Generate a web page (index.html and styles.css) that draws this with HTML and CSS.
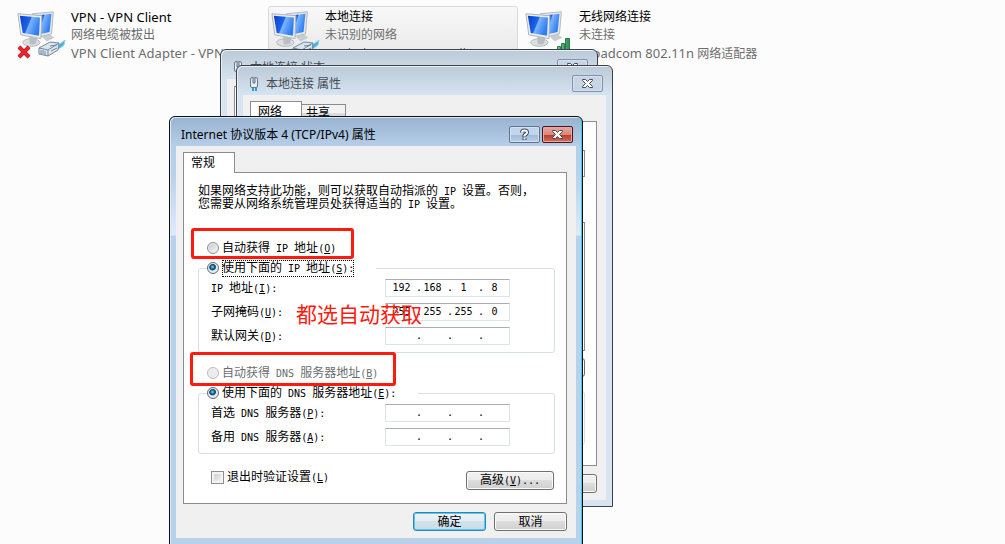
FILE: index.html
```html
<!DOCTYPE html>
<html lang="zh-CN">
<head>
<meta charset="utf-8">
<title>Internet 协议版本 4 (TCP/IPv4) 属性</title>
<link rel="stylesheet" href="styles.css">
</head>
<body>
<svg class="defs" aria-hidden="true">
  <defs>
    <linearGradient id="screen" x1="0" y1="0" x2="1" y2="0.4">
      <stop offset="0" stop-color="#0d3fc4"/><stop offset="0.5" stop-color="#1a63ee"/><stop offset="0.56" stop-color="#7cb5fb"/><stop offset="1" stop-color="#2f7df2"/>
    </linearGradient>
    <linearGradient id="bars" x1="0" y1="0" x2="1" y2="0">
      <stop offset="0" stop-color="#8fd0a4"/><stop offset="1" stop-color="#2f8f55"/>
    </linearGradient>
    <symbol id="monitors" viewBox="0 0 48 48">
      <path d="M27 30l8-3 5 4-8 4z" fill="#c9cdd0"/>
      <path d="M17 6l22-2-2 23-16 4z" fill="#e4e7e8" stroke="#b3b8bc"/>
      <path d="M19 8l18-2-2 19-13 3z" fill="url(#screen)"/>
      <ellipse cx="16" cy="36" rx="9" ry="4" fill="#dcdfe1" stroke="#b3b8bc"/>
      <path d="M14 30l8 1-1 6q-4 2-7 0z" fill="#b9bec2"/>
      <path d="M2 6l25 2-1 24-21-4z" fill="#eceeef" stroke="#aeb3b8"/>
      <path d="M4 8l21 2-1 19-17-3z" fill="url(#screen)"/>
    </symbol>
    <symbol id="plug" viewBox="0 0 28 18">
      <path d="M16 7q6-1 11-6l-1 5q-4 4-9 5z" fill="#43b2dc" stroke="#8fd0e6"/>
      <path d="M1 9l11-6 9 1-1 7-10 6-9-2z" fill="#dce6ef" stroke="#72889d"/>
      <path d="M1 9l9 2 11-7M10 11v6M3 11v4M5 11v4M7 12v4M12 7l7-1M13 12l6-3" fill="none" stroke="#72889d"/>
    </symbol>
    <symbol id="jack" viewBox="0 0 10 16">
      <path d="M4 11v4M7 11v4" stroke="#2ba0d8" stroke-width="2"/>
      <rect x="1.500" y="1.500" width="7" height="10" rx="1.500" fill="#e4edf4" stroke="#66798c"/>
      <path d="M4 1v6h2V1" fill="#b5c4d2" stroke="#66798c"/>
    </symbol>
    <symbol id="cross" viewBox="0 0 13 11">
      <path d="M1.500 1.500h3l2 2 2-2h3v1l-3 3 3 3v1h-3l-2-2-2 2h-3v-1l3-3-3-3z" fill="#fff" stroke="#444a5c"/>
    </symbol>
    <symbol id="question" viewBox="0 0 11 13">
      <path d="M3 4.500Q3 2.500 5.500 2.500T8 4.500Q8 5.500 6.500 6.500T5.500 9M5.500 10v2" fill="none" stroke="#3f4a63" stroke-width="4"/>
      <path d="M3 4.500Q3 2.500 5.500 2.500T8 4.500Q8 5.500 6.500 6.500T5.500 8.500M5.500 10v1.500" fill="none" stroke="#fff" stroke-width="2"/>
    </symbol>
  </defs>
</svg>

<main class="desktop">
  <ul class="connections">
    <li class="connection">
      <span class="connection-icon">
        <svg class="monitors"><use href="#monitors"/></svg>
        <svg class="plug"><use href="#plug"/></svg>
        <svg class="unplugged" viewBox="0 0 14 14"><path d="M2 2l10 10M12 2L2 12" stroke="#a01318" stroke-width="4"/><path d="M2 2l10 10M12 2L2 12" stroke="#e8262c" stroke-width="3"/></svg>
      </span>
      <span class="connection-text"><b class="latin">VPN - VPN Client</b><span>网络电缆被拔出</span><span class="latin">VPN Client Adapter - VPN</span></span>
    </li>
    <li class="connection selected">
      <span class="connection-icon">
        <svg class="monitors"><use href="#monitors"/></svg>
        <svg class="plug"><use href="#plug"/></svg>
      </span>
      <span class="connection-text"><b>本地连接</b><span>未识别的网络</span><span class="latin">Realtek PCIe GBE Family C...</span></span>
    </li>
    <li class="connection">
      <span class="connection-icon">
        <svg class="monitors"><use href="#monitors"/></svg>
        <svg class="signal" viewBox="0 0 20 18"><path d="M1.500 13.500h3v4h-3zM5.500 10.500h3v7h-3zM9.500 7.500h3v10h-3zM13.500 2.500h4v15h-4z" fill="url(#bars)" stroke="#2d7d4b"/></svg>
      </span>
      <span class="connection-text"><b>无线网络连接</b><span>未连接</span><span><span class="latin">Broadcom 802.11n</span> 网络适配器</span></span>
    </li>
  </ul>

  <section class="window inactive status-window">
    <header class="titlebar">
      <svg class="jack"><use href="#jack"/></svg>
      <h2>本地连接 状态</h2>
      <button class="caption" aria-label="关闭"><svg class="cross"><use href="#cross"/></svg></button>
    </header>
    <div class="client"><div class="panel"></div></div>
  </section>

  <section class="window inactive props-window">
    <header class="titlebar">
      <svg class="jack"><use href="#jack"/></svg>
      <h2>本地连接 属性</h2>
      <button class="caption" aria-label="关闭"><svg class="cross"><use href="#cross"/></svg></button>
    </header>
    <div class="client">
      <div class="tabs"><button class="tab current">网络</button><button class="tab">共享</button></div>
      <div class="panel">
        <div class="adapter-box"></div>
        <div class="items-box"></div>
        <button class="push item-action" aria-label="属性"></button>
        <div class="about-box"></div>
      </div>
      <div class="actions"><button class="push" aria-label="取消"></button></div>
    </div>
  </section>

  <section class="window ip-window">
    <header class="titlebar">
      <h1>Internet 协议版本 4 (TCP/IPv4) 属性</h1>
      <button class="caption" aria-label="帮助"><svg class="question"><use href="#question"/></svg></button>
      <button class="caption close" aria-label="关闭"><svg class="cross"><use href="#cross"/></svg></button>
    </header>
    <div class="client">
      <div class="tabs"><button class="tab current">常规</button></div>
      <form class="panel">
        <p class="intro">如果网络支持此功能，则可以获取自动指派的<i> IP </i>设置。否则，<br>您需要从网络系统管理员处获得适当的<i> IP </i>设置。</p>

        <label class="choice auto-ip"><input type="radio" name="ip"><span>自动获得<i> IP </i>地址<i>(<u>O</u>)</i></span></label>
        <fieldset class="group">
          <legend><label class="choice"><input type="radio" name="ip" checked><span class="focused">使用下面的<i> IP </i>地址<i>(<u>S</u>):</i></span></label></legend>
          <div class="row">
            <label for="ip1"><i>IP </i>地址<i>(<u>I</u>):</i></label>
            <div class="address"><input id="ip1" value="192"><i>.</i><input aria-label="IP 2" value="168"><i>.</i><input aria-label="IP 3" value="1"><i>.</i><input aria-label="IP 4" value="8"></div>
          </div>
          <div class="row">
            <label for="mask1">子网掩码<i>(<u>U</u>):</i></label>
            <div class="address"><input id="mask1" value="255"><i>.</i><input aria-label="掩码 2" value="255"><i>.</i><input aria-label="掩码 3" value="255"><i>.</i><input aria-label="掩码 4" value="0"></div>
          </div>
          <div class="row">
            <label for="gate1">默认网关<i>(<u>D</u>):</i></label>
            <div class="address"><input id="gate1"><i>.</i><input aria-label="网关 2"><i>.</i><input aria-label="网关 3"><i>.</i><input aria-label="网关 4"></div>
          </div>
        </fieldset>

        <label class="choice auto-dns"><input type="radio" name="dns" disabled><span>自动获得<i> DNS </i>服务器地址<i>(<u>B</u>)</i></span></label>
        <fieldset class="group">
          <legend><label class="choice"><input type="radio" name="dns" checked><span>使用下面的<i> DNS </i>服务器地址<i>(<u>E</u>):</i></span></label></legend>
          <div class="row">
            <label for="dns1">首选<i> DNS </i>服务器<i>(<u>P</u>):</i></label>
            <div class="address"><input id="dns1"><i>.</i><input aria-label="首选 2"><i>.</i><input aria-label="首选 3"><i>.</i><input aria-label="首选 4"></div>
          </div>
          <div class="row">
            <label for="alt1">备用<i> DNS </i>服务器<i>(<u>A</u>):</i></label>
            <div class="address"><input id="alt1"><i>.</i><input aria-label="备用 2"><i>.</i><input aria-label="备用 3"><i>.</i><input aria-label="备用 4"></div>
          </div>
        </fieldset>

        <div class="options">
          <label class="choice verify"><input type="checkbox"><span>退出时验证设置<i>(<u>L</u>)</i></span></label>
          <button type="button" class="push wide">高级<i>(<u>V</u>)...</i></button>
        </div>
      </form>
      <div class="actions"><button class="push default">确定</button><button class="push">取消</button></div>
    </div>
  </section>

  <div class="mark mark-ip"></div>
  <div class="mark mark-dns"></div>
  <div class="note">都选自动获取</div>
</main>
</body>
</html>
```
FILE: styles.css
```css
* { box-sizing: border-box; }

body {
  margin: 0;
  background: #fcfcfc;
  color: #000;
  font: 12px/16px "Noto Sans", "Noto Sans CJK SC", sans-serif;
}

button, input {
  margin: 0;
  padding: 0;
  font: inherit;
  color: inherit;
}

h1, h2, p, ul { margin: 0; padding: 0; font-size: 12px; font-weight: 400; }

.defs { position: absolute; width: 0; height: 0; }

.desktop {
  position: relative;
  height: 100vh;
  overflow: hidden;
}

/* Connection list */
.connections {
  display: grid;
  grid-template-columns: repeat(3, 250px);
  gap: 4px;
  padding: 6px 14px;
  list-style: none;
}
.connection {
  display: flex;
  gap: 8px;
  height: 60px;
  padding: 1px;
  border: 1px solid transparent;
  border-radius: 3px;
  white-space: nowrap;
}
.connection.selected {
  border-color: #d9d9d9;
  background: linear-gradient(#f8f8f8, #e6e6e6);
}
.connection-icon { position: relative; width: 47px; flex: none; }
.connection-text { display: flex; flex-direction: column; line-height: 18px; color: #6d6d6d; }
.connection-text b { font-weight: 400; color: #000; }
.connection-text .latin { font-size: 13px; }
.monitors { display: block; width: 46px; height: 46px; }
.plug { position: absolute; left: 22px; top: 31px; width: 28px; height: 18px; }
.unplugged { position: absolute; left: 1px; top: 37px; width: 14px; height: 14px; }
.signal { position: absolute; left: 28px; top: 28px; width: 20px; height: 18px; }

/* Windows */
.window {
  position: absolute;
  isolation: isolate;
  display: flex;
  flex-direction: column;
  padding: 0 6px 6px;
  border: 1px solid #111;
  border-radius: 6px 6px 0 0;
  background: linear-gradient(#98b3d1, #b5cde7 28px, #b9d1ea 58px, #dfeaf7 118px, #b9d1ea 119px);
  box-shadow: inset 1px 1px #dceaf6, inset -1px 0 #35cdf0;
}
.window.inactive {
  border-color: #3c4248;
  background: linear-gradient(#bccad8, #d7e4f1 30px);
  box-shadow: inset 1px 1px #e8f0f7;
}
.status-window { left: 220px; top: 49px; width: 378px; height: 442px; }
.props-window { left: 236px; top: 65px; width: 377px; height: 442px; }
.ip-window { left: 169px; top: 116px; width: 414px; }

.titlebar {
  display: flex;
  align-items: center;
  gap: 2px;
  height: 29px;
  padding: 6px 3px 0 5px;
}
.titlebar h1, .titlebar h2 { flex: 1; }
.inactive .titlebar { color: #444c55; }
.inactive h2 { padding-left: 5px; }
.jack { width: 10px; height: 16px; margin-left: 1px; }
.cross { display: block; width: 13px; height: 11px; }
.question { display: block; width: 11px; height: 13px; }

.caption {
  display: flex;
  align-items: center;
  justify-content: center;
  width: 31px;
  height: 17px;
  border: 1px solid #5d7391;
  border-radius: 2px;
  background: linear-gradient(#c2d5e9 50%, #9db8d6 50%, #b9d0e8);
  box-shadow: inset 0 0 0 1px #d3e2f2;
}
.inactive .caption { border-color: #8391ae; background: #c6d4e3; }
.caption.close {
  border-color: #48141d;
  background: linear-gradient(#e5a89f, #d98879 50%, #b73a25 50%, #d0705c);
  box-shadow: inset 0 0 0 1px #e9a99e;
}

.client {
  display: flex;
  flex: 1;
  flex-direction: column;
  padding: 6px 9px 7px 7px;
  background: #f0f0f0;
}
.panel { border: 1px solid #898c95; background: #fff; }

.tabs { display: flex; align-items: flex-end; height: 21px; margin-bottom: -1px; }
.tab {
  height: 18px;
  width: 44px;
  padding: 0 4px;
  border: 1px solid #898c95;
  border-left: 0;
  background: linear-gradient(#f3f3f3 50%, #dcdcdc 50%, #d0d0d0);
  text-align: left;
}
.tab.current {
  z-index: 1;
  width: 52px;
  height: 21px;
  padding: 0 7px;
  border-left: 1px solid #898c95;
  border-bottom: 0;
  background: #fff;
}

.status-window .panel { flex: 1; margin-top: 1px; }
.props-window .panel { display: flex; flex: 1; flex-direction: column; padding: 28px 11px 20px; }
.adapter-box { height: 27px; border: 1px solid #898c95; }
.items-box { height: 129px; margin-top: 45px; border: 1px solid #898c95; }
.item-action.push { align-self: flex-end; margin-top: 7px; }
.about-box { height: 54px; margin-top: 14px; border: 1px solid #d5dfe5; border-radius: 3px; }

.actions { display: flex; justify-content: flex-end; gap: 8px; padding-top: 8px; }
.push {
  width: 73px;
  height: 19px;
  border: 1px solid #707070;
  border-radius: 3px;
  background: linear-gradient(#f2f2f2, #ebebeb 50%, #dddddd 50%, #cfcfcf);
  box-shadow: inset 0 0 0 1px #fafafa;
  line-height: 16px;
}
.push.wide { width: 88px; }
.push.default {
  border-color: #3c7fb1;
  background: linear-gradient(#eef3f6, #e3edf3 50%, #d2e2ec 50%, #c9dce7);
  box-shadow: inset 0 0 0 1px #48d0f5;
}

/* Address form */
i { font: 10px/16px "DejaVu Sans Mono", monospace; white-space: pre; }
.ip-window .panel { padding: 12px 11px 13px 14px; }
.intro { line-height: 12px; }
.intro i { line-height: 12px; }

.choice { display: flex; align-items: center; gap: 3px; height: 16px; white-space: nowrap; }
.choice input {
  flex: none;
  width: 12px;
  height: 12px;
  border: 1px solid #8e8f8f;
  appearance: none;
  background: linear-gradient(135deg, #c3c7cc, #fafafa);
  box-shadow: inset 0 0 0 1px #f0f0f0;
}
.choice input[type="radio"] { border-radius: 50%; }
.choice input:checked {
  border-color: #5b6a78;
  background: radial-gradient(circle at 45% 40%, #7fd4f5, #126a9c 25%, #0b3355 36%, #dfe8ee 46%);
}
.choice:has(input:disabled) { color: #6d6d6d; }
.choice input:disabled { border-color: #bcbcbc; background: #ececec; }
.auto-ip { margin: 29px 0 4px 9px; }
.auto-dns { margin: 12px 0 4px 9px; }
.focused { outline: 1px dotted #000; outline-offset: -1px; }

.group {
  min-width: 0;
  margin: 0;
  padding: 3px 44px 7px 12px;
  border: 1px solid #d5dfe5;
  border-radius: 3px;
}
.group legend { margin-left: -4px; padding: 0 22px 0 0; }
.row { display: flex; align-items: center; justify-content: space-between; height: 18px; }
.row + .row { margin-top: 6px; }

.address {
  display: flex;
  width: 125px;
  height: 18px;
  padding-left: 5px;
  border: 1px solid #dde3ea;
  border-top-color: #abadb3;
  background: #fff;
}
.address input {
  width: 25px;
  padding-right: 4px;
  border: 0;
  background: none;
  font: 10px/16px "DejaVu Sans Mono", monospace;
  text-align: center;
}

.options { display: flex; justify-content: space-between; margin-top: 17px; padding: 0 1px 0 13px; }
.verify { height: 13px; gap: 3px; }
.verify input { width: 13px; height: 13px; box-shadow: inset 0 0 0 2px #f4f4f4; }

/* Annotations drawn over the dialog */
.mark { position: absolute; border: 3px solid #ff1a0e; border-radius: 3px; }
.mark-ip { left: 191px; top: 228px; width: 163px; height: 31px; }
.mark-dns { left: 190px; top: 352px; width: 206px; height: 34px; }
.note { position: absolute; left: 296px; top: 300px; font-size: 21px; line-height: 28px; color: #ff1a0e; }
```
